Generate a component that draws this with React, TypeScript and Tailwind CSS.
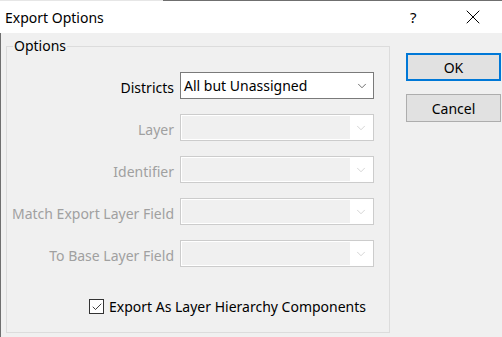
import { Check, ChevronDown, X } from "lucide-react";

const font = { fontFamily: '"Noto Sans", "Open Sans", sans-serif' };

function Combo({ value, disabled }: { value?: string; disabled?: boolean }) {
  if (disabled) {
    return (
      <div className="flex h-[27px] w-[194px] items-stretch border border-[#cccccc] bg-white p-px">
        <div className="flex-1 bg-[#f0f0f0]" />
        <div className="flex w-[22px] items-center justify-center text-[#c4c4c4]">
          <ChevronDown size={14} strokeWidth={1.2} />
        </div>
      </div>
    );
  }
  return (
    <div className="flex h-[27px] w-[194px] items-center border border-[#7a7a7a] bg-white pl-[3px]">
      <span className="flex-1 text-[14px] text-black">{value}</span>
      <div className="flex w-[22px] items-center justify-center text-[#333]">
        <ChevronDown size={14} strokeWidth={1.2} />
      </div>
    </div>
  );
}

const rows = [
  { label: "Districts", value: "All but Unassigned" },
  { label: "Layer" },
  { label: "Identifier" },
  { label: "Match Export Layer Field" },
  { label: "To Base Layer Field" },
];

export default function App() {
  return (
    <div className="h-[337px] w-[502px] overflow-hidden bg-[#f0f0f0]" style={font}>
      <div className="flex h-[33px] flex-col bg-white">
        <div className="flex h-px">
          <div className="w-[163px] bg-[#e6e6e6]" />
          <div className="flex-1 bg-[#6f6f6f]" />
        </div>
        <div className="flex flex-1 items-center pl-[5px] text-[14px] text-black">
          <span className="flex-1">Export Options</span>
          <span className="w-[51px] text-[15px]">?</span>
          <X size={24} strokeWidth={1} className="mr-[17px]" />
        </div>
      </div>
      <div className="flex h-[304px] border-l border-[#6f6f6f]">
        <div className="relative mt-[13px] ml-[5px] h-[287px] w-[384px] border border-[#dcdcdc] pt-[25px]">
          <span className="absolute -top-[11px] left-[6px] bg-[#f0f0f0] px-[1px] text-[14px] leading-5 text-black">
            Options
          </span>
          <div className="grid grid-cols-[167px_194px] gap-x-[6px] gap-y-[15px] text-[14px]">
            {rows.map((r, i) => (
              <div key={r.label} className="contents">
                <div
                  className={`flex h-[27px] items-center justify-end pt-[3px] ${
                    i === 0 ? "text-black" : "text-[#a0a0a0]"
                  }`}
                >
                  {r.label}
                </div>
                <Combo value={r.value} disabled={i > 0} />
              </div>
            ))}
          </div>
          <div className="mt-[29px] flex items-center pl-[82px] text-[14px] text-black">
            <div className="flex h-[15px] w-[15px] items-center justify-center border border-[#333] bg-white">
              <Check size={12} strokeWidth={1.5} />
            </div>
            <span className="ml-[5px]">Export As Layer Hierarchy Components</span>
          </div>
        </div>
        <div className="mt-[20px] ml-[16px] flex flex-col gap-[13px] text-[14px] text-black">
          <button className="h-[28px] w-[95px] border-2 border-[#0078d7] bg-[#e1e1e1]">OK</button>
          <button className="h-[28px] w-[95px] border border-[#adadad] bg-[#e1e1e1]">Cancel</button>
        </div>
      </div>
    </div>
  );
}
